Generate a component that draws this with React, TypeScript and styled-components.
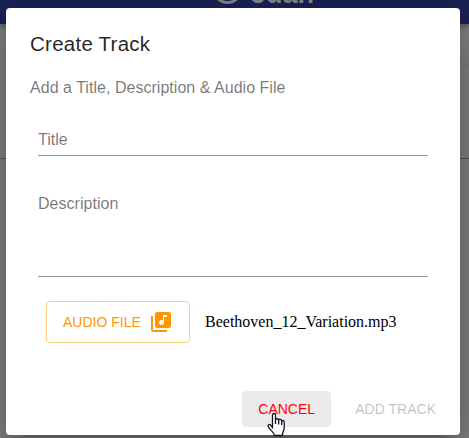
import React from "react";
import styled, { createGlobalStyle } from "styled-components";

const GlobalStyle = createGlobalStyle`
  *, *::before, *::after { box-sizing: border-box; }
  html, body { margin: 0; height: 100%; overflow: hidden; }
  body { background: #818181; font-family: "Liberation Sans", Arial, sans-serif; }
`;

const Page = styled.div`
  height: 438px;
  overflow: hidden;
`;

const AppBar = styled.header`
  position: relative;
  height: 24px;
  background: #1a2256;
  display: flex;
  align-items: flex-end;
  gap: 6px;
  padding: 0 0 17px 210px;
  color: #858585;
  box-shadow: 0 2px 4px -1px rgba(0, 0, 0, 0.2), 0 4px 5px rgba(0, 0, 0, 0.14), 0 1px 10px rgba(0, 0, 0, 0.12);

  svg { flex: none; display: block; }
`;

const UserName = styled.span`
  font-size: 27px;
  font-weight: 700;
  line-height: 24px;
  margin-bottom: 1px;
`;

const Band = styled.div<{ $height: number; $line: string }>`
  height: ${(p) => p.$height}px;
  border-bottom: 1px solid ${(p) => p.$line};
`;

const Overlay = styled.div`
  position: absolute;
  inset: 0;
  padding: 8px 9px 3px 6px;
`;

const Dialog = styled.section`
  height: 427px;
  background: #fff;
  border-radius: 4px;
  box-shadow: 0 11px 15px -7px rgba(0, 0, 0, 0.2), 0 24px 38px 3px rgba(0, 0, 0, 0.14), 0 9px 46px 8px rgba(0, 0, 0, 0.12);
  display: flex;
  flex-direction: column;
`;

const Title = styled.h2`
  margin: 0;
  padding: 20px 24px 12px;
  font-size: 20.5px;
  font-weight: 400;
  line-height: 32px;
  letter-spacing: 0.25px;
  color: rgba(0, 0, 0, 0.87);
`;

const Content = styled.div`
  flex: 1;
  padding: 4px 24px 0;
`;

const Hint = styled.p`
  margin: 0;
  font-size: 16px;
  line-height: 24px;
  letter-spacing: 0.03px;
  color: rgba(0, 0, 0, 0.54);
`;

const Field = styled.label<{ $top: number; $height: number }>`
  display: block;
  margin: ${(p) => p.$top}px 8px 0;
  height: ${(p) => p.$height}px;
  border-bottom: 1px solid #949494;
  font-size: 16px;
  line-height: 20px;
  letter-spacing: 0.03px;
  color: rgba(0, 0, 0, 0.54);
`;

const FileRow = styled.div`
  display: flex;
  align-items: center;
  margin: 24px 16px 0;
  gap: 15px;
`;

const Button = styled.button<{ $kind: "outlined" | "hovered" | "disabled" }>`
  display: flex;
  align-items: center;
  border: 0;
  border-radius: 4px;
  padding: 0 16px;
  height: 36px;
  font-family: inherit;
  font-size: 14px;
  letter-spacing: 0.02px;
  white-space: nowrap;
  text-transform: uppercase;
  background: ${(p) => (p.$kind === "hovered" ? "#ebebeb" : "transparent")};
  color: ${(p) => ({ outlined: "#ff9800", hovered: "#ff0000", disabled: "rgba(0,0,0,0.26)" })[p.$kind]};
  ${(p) =>
    p.$kind === "outlined" &&
    "width: 144px; height: 42px; border: 1px solid #ffcb7f; gap: 8px; letter-spacing: 0;"}

  svg { flex: none; }
`;

const FileName = styled.span`
  font-family: "Liberation Serif", "Times New Roman", serif;
  font-size: 16px;
  line-height: 18px;
  color: #000;
`;

const Actions = styled.footer`
  display: flex;
  justify-content: flex-end;
  gap: 8px;
  padding: 8px;
`;

const Pointer = styled.svg`
  position: absolute;
  left: 266px;
  top: 412px;
`;

const AccountIcon = () => (
  <svg width="35" height="35" viewBox="0 0 24 24" fill="currentColor">
    <path
      fillRule="evenodd"
      d="M12 2a10 10 0 1 0 0 20a10 10 0 1 0 0-20zM12 4a8 8 0 1 1 0 16a8 8 0 1 1 0-16z"
    />
  </svg>
);

const LibraryMusicIcon = () => (
  <svg width="24" height="24" viewBox="0 0 24 24" fill="currentColor">
    <path d="M20 2H8c-1.100 0-2 .9-2 2v12c0 1.100.9 2 2 2h12c1.100 0 2-.9 2-2V4c0-1.100-.9-2-2-2zm-2 5h-3v5.500c0 1.380-1.120 2.500-2.500 2.500S10 13.880 10 12.500s1.120-2.500 2.500-2.500c.57 0 1.080.19 1.500.51V5h4v2zM4 6H2v14c0 1.100.9 2 2 2h14v-2H4V6z" />
  </svg>
);

export default function App() {
  return (
    <Page>
      <GlobalStyle />
      <AppBar>
        <AccountIcon />
        <UserName>Juan</UserName>
      </AppBar>
      <Band $height={42} $line="#777" />
      <Band $height={93} $line="#555" />
      <Overlay>
        <Dialog role="dialog" aria-label="Create Track">
          <Title>Create Track</Title>
          <Content>
            <Hint>Add a Title, Description &amp; Audio File</Hint>
            <Field $top={30} $height={26}>Title</Field>
            <Field $top={38} $height={83}>Description</Field>
            <FileRow>
              <Button $kind="outlined">
                Audio File
                <LibraryMusicIcon />
              </Button>
              <FileName>Beethoven_12_Variation.mp3</FileName>
            </FileRow>
          </Content>
          <Actions>
            <Button $kind="hovered">Cancel</Button>
            <Button $kind="disabled">Add Track</Button>
          </Actions>
        </Dialog>
      </Overlay>
      <Pointer width="20" height="25" viewBox="0 0 20 25">
        <path
          d="M6.500 16.500V3.200C6.500 .9 9.500 .9 9.500 3.200V8C10 6.300 12.400 6.300 12.700 8C13.500 6.700 15.500 7 15.700 9C16.700 8 18.200 8.600 18.200 10.500V16C18.200 18.500 16.500 19 16.500 23.500H8.500C8.200 20.500 5 19 2.500 15.200C1.100 13 3.200 11.700 4.800 13.300L6.500 15.500M9.500 8V12M12.700 8V12.500M15.700 9V13"
          fill="#fff"
          stroke="#14141f"
          strokeWidth="1.300"
          strokeLinejoin="round"
        />
      </Pointer>
    </Page>
  );
}
